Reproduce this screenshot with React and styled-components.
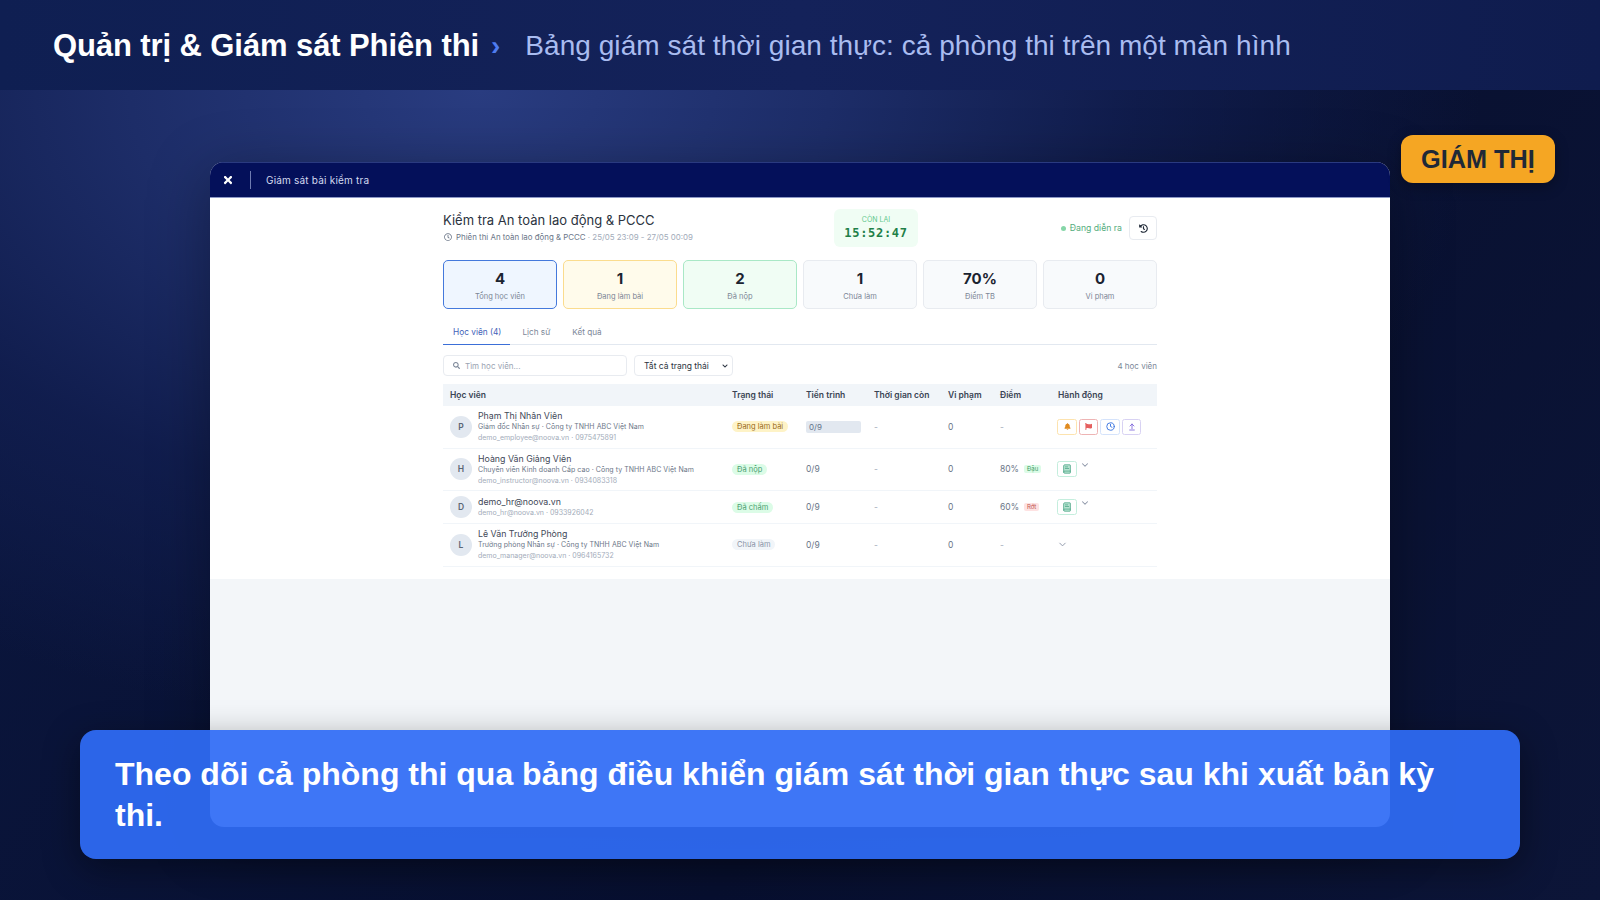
import styled, { createGlobalStyle } from "styled-components";
import { FaBell, FaFlag, FaHistory, FaTimes, FaRegClock, FaSearch, FaChevronDown } from "react-icons/fa";
import { ArrowUpFromLine, BookText, ChevronDown, Clock } from "lucide-react";

const GlobalStyle = createGlobalStyle`
  html, body { margin: 0; padding: 0; }
  body { width: 1600px; height: 900px; overflow: hidden; background: #070f2b; }
`;

const Slide = styled.div`
  position: relative;
  width: 1600px;
  height: 900px;
  overflow: hidden;
  font-family: "Liberation Sans", Arial, sans-serif;
  background:
    radial-gradient(ellipse 1000px 640px at 480px 90px, #293c80 0%, #1d2d68 35%, rgba(18, 31, 82, 0.8) 65%, rgba(10, 20, 52, 0) 100%),
    linear-gradient(125deg, #0b1740 0%, #081030 60%, #0c1538 100%);
`;

const Header = styled.header`
  height: 90px;
  box-sizing: border-box;
  display: flex;
  align-items: center;
  padding: 2px 0 0 53px;
  background: linear-gradient(90deg, #0f1f52 0%, #14225a 50%, #0f1c4e 100%);
`;

const HeaderTitle = styled.h1`
  margin: 0;
  font-size: 31px;
  letter-spacing: -0.1px;
  font-weight: 700;
  color: #ffffff;
`;

const HeaderArrow = styled.span`
  margin: 0 25px 0 12px;
  font-size: 28px;
  font-weight: 700;
  color: #4f7cf0;
`;

const HeaderSub = styled.span`
  font-size: 28px;
  letter-spacing: 0.05px;
  color: #a9bcf0;
`;

const Stage = styled.main`
  padding: 72px 0 0 210px;
`;

const Window = styled.section`
  width: 1180px;
  height: 665px;
  display: flex;
  flex-direction: column;
  border-radius: 14px;
  overflow: hidden;
  background: #f3f6f9;
  box-shadow: 0 12px 60px rgba(0, 0, 0, 0.35);
`;

const TitleBar = styled.div`
  height: 36px;
  flex: none;
  display: flex;
  align-items: center;
  background: #04105a;
  border-top: 1px solid #2a3a80;
  border-bottom: 1px solid #8d98c6;
  box-sizing: border-box;
  color: #ffffff;
  font-family: Inter, sans-serif;
`;

const CloseIcon = styled(FaTimes)`
  margin-left: 12px;
  font-size: 12px;
`;

const TitleDivider = styled.span`
  width: 1px;
  height: 18px;
  margin: 0 15px 0 16px;
  background: #6f7bb0;
`;

const TitleText = styled.span`
  font-size: 10px;
  letter-spacing: 0.2px;
  color: #d5dbf0;
`;

const Page = styled.div`
  flex: none;
  height: 381px;
  box-sizing: border-box;
  padding: 11px 233px 0;
  background: #ffffff;
  font-family: Inter, sans-serif;
`;

const TopRow = styled.div`
  display: flex;
  align-items: center;
  height: 38px;
  margin-bottom: 13px;
`;

const ExamInfo = styled.div`
  width: 391px;
  margin-top: -2px;
`;

const ExamTitle = styled.div`
  font-size: 13px;
  line-height: 16px;
  color: #2b3340;
`;

const ExamMeta = styled.div`
  display: flex;
  align-items: center;
  gap: 4px;
  margin-top: 4px;
  font-size: 7.9px;
  line-height: 11px;
  color: #6b7688;
  svg { font-size: 8px; margin-left: 1px; }
`;

const ExamDates = styled.span`
  color: #a3acba;
`;

const Countdown = styled.div`
  width: 84px;
  height: 38px;
  display: flex;
  flex-direction: column;
  align-items: center;
  justify-content: center;
  border-radius: 6px;
  background: #f0fdf4;
`;

const CountdownLabel = styled.span`
  font-size: 7px;
  line-height: 9px;
  color: #5fc88c;
`;

const CountdownTime = styled.span`
  margin-top: 2px;
  font-family: "DejaVu Sans Mono", monospace;
  font-size: 12px;
  line-height: 15px;
  font-weight: 700;
  letter-spacing: 0.7px;
  color: #1f8048;
`;

const TopRight = styled.div`
  margin-left: auto;
  display: flex;
  align-items: center;
  gap: 7px;
`;

const LiveStatus = styled.span`
  display: flex;
  align-items: center;
  gap: 4px;
  font-size: 8.7px;
  color: #55ad7d;
`;

const LiveDot = styled.span`
  width: 5px;
  height: 5px;
  border-radius: 50%;
  background: #86d6a8;
`;

const HistoryButton = styled.span`
  width: 28px;
  height: 24px;
  display: flex;
  align-items: center;
  justify-content: center;
  box-sizing: border-box;
  border: 1px solid #e8ebf0;
  border-radius: 4px;
  color: #1f2937;
  font-size: 9px;
`;

const Stats = styled.div`
  display: grid;
  grid-template-columns: repeat(6, 1fr);
  gap: 6px;
  margin-bottom: 12px;
`;

const STAT_TONES = {
  blue: { bg: "#eff6ff", line: "#4479dc" },
  amber: { bg: "#fffbeb", line: "#fbdc8e" },
  green: { bg: "#f0fdf4", line: "#a9e8c6" },
  plain: { bg: "#f8fafc", line: "#e8ebf0" },
};

const StatCard = styled.div`
  height: 49px;
  box-sizing: border-box;
  display: flex;
  flex-direction: column;
  align-items: center;
  padding-top: 9px;
  border-radius: 5px;
  border: 1px solid ${({ $tone }) => STAT_TONES[$tone].line};
  background: ${({ $tone }) => STAT_TONES[$tone].bg};
`;

const StatValue = styled.span`
  font-size: 15px;
  line-height: 18px;
  font-weight: 700;
  color: #1b2330;
`;

const StatLabel = styled.span`
  margin-top: 4px;
  font-size: 7.5px;
  line-height: 10px;
  color: #7c8696;
`;

const Tabs = styled.div`
  display: flex;
  height: 23px;
  border-bottom: 1px solid #e2e8f0;
  margin-bottom: 10px;
`;

const Tab = styled.span`
  box-sizing: border-box;
  height: 24px;
  padding: ${({ $active }) => ($active ? "0 9px 0 10px" : "0 11px")};
  margin-right: ${({ $active }) => ($active ? "1px" : "0")};
  font-size: ${({ $active }) => ($active ? "8.3px" : "8.2px")};
  line-height: 22px;
  color: ${({ $active }) => ($active ? "#3f5fb8" : "#7c8798")};
  border-bottom: ${({ $active }) => ($active ? "1.5px solid #3b6fd8" : "none")};
`;

const Filters = styled.div`
  display: flex;
  align-items: center;
  gap: 7px;
  margin-bottom: 8px;
`;

const SearchBox = styled.div`
  width: 184px;
  height: 21px;
  box-sizing: border-box;
  display: flex;
  align-items: center;
  gap: 5px;
  padding-left: 9px;
  border: 1px solid #e8ebf0;
  border-radius: 4px;
  font-size: 8px;
  color: #9aa3b2;
  svg { font-size: 7px; color: #7c8798; }
`;

const SelectBox = styled.div`
  width: 99px;
  height: 21px;
  box-sizing: border-box;
  display: flex;
  align-items: center;
  justify-content: space-between;
  padding: 0 4px 0 9px;
  border: 1px solid #e8ebf0;
  border-radius: 4px;
  font-size: 8.5px;
  color: #2b3340;
  svg { font-size: 6px; }
`;

const Count = styled.span`
  margin-left: auto;
  font-size: 8px;
  color: #7c8798;
`;

const COLUMNS = "282px 74px 68px 74px 52px 58px 106px";

const TableHead = styled.div`
  display: grid;
  grid-template-columns: ${COLUMNS};
  height: 22px;
  align-items: center;
  background: #f1f5f9;
  font-size: 8.5px;
  font-weight: 600;
  color: #3a4454;
`;

const HeadCell = styled.span`
  padding-left: 7px;
`;

const Row = styled.div`
  display: grid;
  grid-template-columns: ${COLUMNS};
  height: ${({ $short }) => ($short ? "33px" : "42.5px")};
  box-sizing: border-box;
  align-items: center;
  border-bottom: 1px solid #f1f5f9;
  font-size: 8.5px;
  color: #6b7688;
`;

const Cell = styled.div`
  padding-left: 7px;
  display: flex;
  align-items: center;
`;

const Dash = styled.span`
  color: #a3acba;
`;

const Avatar = styled.span`
  flex: none;
  width: 22px;
  height: 22px;
  margin-right: 6px;
  display: flex;
  align-items: center;
  justify-content: center;
  border-radius: 50%;
  background: #e2e8f0;
  font-size: 8.5px;
  font-weight: 600;
  color: #5b6675;
`;

const StudentName = styled.div`
  font-size: 8.8px;
  line-height: 11px;
  color: #3f4958;
`;

const StudentRole = styled.div`
  font-size: 7px;
  line-height: 11px;
  letter-spacing: 0.05px;
  color: #6b7688;
`;

const StudentContact = styled.div`
  font-size: 7px;
  line-height: 11px;
  color: #a3acba;
`;

const BADGE_TONES = {
  amber: { bg: "#fef3c7", fg: "#9a6b1a" },
  green: { bg: "#dcfce7", fg: "#4aa070" },
  grey: { bg: "#f1f5f9", fg: "#8a94a6" },
};

const Badge = styled.span`
  height: 11px;
  padding: 0 5px;
  border-radius: 6px;
  font-size: 7.5px;
  line-height: 11px;
  background: ${({ $tone }) => BADGE_TONES[$tone].bg};
  color: ${({ $tone }) => BADGE_TONES[$tone].fg};
`;

const ProgressBox = styled.span`
  width: 55px;
  height: 12px;
  box-sizing: border-box;
  padding-left: 3px;
  border-radius: 2px;
  background: #e2e8f0;
  font-size: 8px;
  line-height: 12px;
  color: #64748b;
`;

const ScoreTag = styled.span`
  margin-left: 5px;
  padding: 0 3px;
  height: 8px;
  border-radius: 2px;
  font-size: 6px;
  line-height: 8px;
  background: ${({ $fail }) => ($fail ? "#fee2e2" : "#dcfce7")};
  color: ${({ $fail }) => ($fail ? "#c0534f" : "#3f9a66")};
`;

const Actions = styled(Cell)`
  gap: 2px;
  padding-left: 6px;
`;

const ACTION_TONES = {
  amber: { line: "#fde3ae", fg: "#e08a1e" },
  red: { line: "#eeb4b4", fg: "#e5605f" },
  blue: { line: "#d5e3fb", fg: "#3b74e0" },
  purple: { line: "#d8d2f3", fg: "#7a60d8" },
  teal: { line: "#c4eedd", fg: "#4aa585" },
};

const ActionButton = styled.span`
  width: ${({ $narrow }) => ($narrow ? "19px" : "20px")};
  height: 16px;
  box-sizing: border-box;
  display: flex;
  align-items: center;
  justify-content: center;
  border-radius: 2.5px;
  font-size: 7px;
  background: #ffffff;
  border: 1px solid ${({ $tone }) => ACTION_TONES[$tone].line};
  color: ${({ $tone }) => ACTION_TONES[$tone].fg};
`;

const RaisedChevron = styled(ChevronDown)`
  margin: -9px 0 0 1px;
  color: #8a94a6;
`;

const PlainChevron = styled(ChevronDown)`
  color: #8a94a6;
`;

const RoleBadge = styled.div`
  position: absolute;
  left: 1401px;
  top: 135px;
  height: 48px;
  padding: 0 20px;
  display: flex;
  align-items: center;
  border-radius: 12px;
  background: #f5a623;
  box-shadow: 0 4px 14px rgba(0, 0, 0, 0.3);
  font-size: 25.3px;
  font-weight: 700;
  color: #1f2937;
`;

const Caption = styled.div`
  position: absolute;
  left: 80px;
  top: 730px;
  width: 1440px;
  height: 129px;
  box-sizing: border-box;
  padding: 24px 35px;
  border-radius: 16px;
  background: rgba(47, 108, 245, 0.93);
  box-shadow: 0 10px 36px rgba(0, 0, 0, 0.4);
  font-size: 32px;
  line-height: 41px;
  font-weight: 700;
  color: #ffffff;
`;

const students = [
  {
    initial: "P",
    name: "Phạm Thị Nhân Viên",
    role: "Giám đốc Nhân sự · Công ty TNHH ABC Việt Nam",
    contact: "demo_employee@noova.vn · 0975475891",
    badge: ["amber", "Đang làm bài"],
    active: true,
  },
  {
    initial: "H",
    name: "Hoàng Văn Giảng Viên",
    role: "Chuyên viên Kinh doanh Cấp cao · Công ty TNHH ABC Việt Nam",
    contact: "demo_instructor@noova.vn · 0934083318",
    badge: ["green", "Đã nộp"],
    score: "80%",
    tag: "Đậu",
  },
  {
    initial: "D",
    name: "demo_hr@noova.vn",
    contact: "demo_hr@noova.vn · 0933926042",
    badge: ["green", "Đã chấm"],
    score: "60%",
    tag: "Rớt",
    fail: true,
    short: true,
  },
  {
    initial: "L",
    name: "Lê Văn Trưởng Phòng",
    role: "Trưởng phòng Nhân sự · Công ty TNHH ABC Việt Nam",
    contact: "demo_manager@noova.vn · 0964165732",
    badge: ["grey", "Chưa làm"],
  },
];

const stats = [
  ["blue", "4", "Tổng học viên"],
  ["amber", "1", "Đang làm bài"],
  ["green", "2", "Đã nộp"],
  ["plain", "1", "Chưa làm"],
  ["plain", "70%", "Điểm TB"],
  ["plain", "0", "Vi phạm"],
];

const headers = ["Học viên", "Trạng thái", "Tiến trình", "Thời gian còn", "Vi phạm", "Điểm", "Hành động"];

const StudentActions = ({ student }) => {
  if (student.active) {
    return (
      <Actions>
        <ActionButton $tone="amber"><FaBell /></ActionButton>
        <ActionButton $tone="red" $narrow><FaFlag /></ActionButton>
        <ActionButton $tone="blue"><Clock size={9} strokeWidth={2.5} /></ActionButton>
        <ActionButton $tone="purple" $narrow><ArrowUpFromLine size={8} strokeWidth={2.5} /></ActionButton>
      </Actions>
    );
  }
  if (student.score) {
    return (
      <Actions>
        <ActionButton $tone="teal"><BookText size={10} strokeWidth={2} fill="#bfe7d6" /></ActionButton>
        <RaisedChevron size={10} strokeWidth={2.5} />
      </Actions>
    );
  }
  return (
    <Actions>
      <PlainChevron size={11} />
    </Actions>
  );
};

const App = () => {
  return (
    <Slide>
      <GlobalStyle />
      <Header>
        <HeaderTitle>Quản trị & Giám sát Phiên thi</HeaderTitle>
        <HeaderArrow>›</HeaderArrow>
        <HeaderSub>Bảng giám sát thời gian thực: cả phòng thi trên một màn hình</HeaderSub>
      </Header>

      <Stage>
        <Window>
          <TitleBar>
            <CloseIcon />
            <TitleDivider />
            <TitleText>Giám sát bài kiểm tra</TitleText>
          </TitleBar>
          <Page>
            <TopRow>
              <ExamInfo>
                <ExamTitle>Kiểm tra An toàn lao động & PCCC</ExamTitle>
                <ExamMeta>
                  <FaRegClock />
                  <span>Phiên thi An toàn lao động & PCCC <ExamDates>· 25/05 23:09 - 27/05 00:09</ExamDates></span>
                </ExamMeta>
              </ExamInfo>
              <Countdown>
                <CountdownLabel>CÒN LẠI</CountdownLabel>
                <CountdownTime>15:52:47</CountdownTime>
              </Countdown>
              <TopRight>
                <LiveStatus><LiveDot />Đang diễn ra</LiveStatus>
                <HistoryButton><FaHistory /></HistoryButton>
              </TopRight>
            </TopRow>

            <Stats>
              {stats.map(([tone, value, label]) => (
                <StatCard key={label} $tone={tone}>
                  <StatValue>{value}</StatValue>
                  <StatLabel>{label}</StatLabel>
                </StatCard>
              ))}
            </Stats>

            <Tabs>
              <Tab $active>Học viên (4)</Tab>
              <Tab>Lịch sử</Tab>
              <Tab>Kết quả</Tab>
            </Tabs>

            <Filters>
              <SearchBox><FaSearch />Tìm học viên...</SearchBox>
              <SelectBox>Tất cả trạng thái<FaChevronDown /></SelectBox>
              <Count>4 học viên</Count>
            </Filters>

            <TableHead>
              {headers.map((h) => <HeadCell key={h}>{h}</HeadCell>)}
            </TableHead>
            {students.map((s) => (
              <Row key={s.initial} $short={s.short}>
                <Cell>
                  <Avatar>{s.initial}</Avatar>
                  <div>
                    <StudentName>{s.name}</StudentName>
                    {s.role && <StudentRole>{s.role}</StudentRole>}
                    <StudentContact>{s.contact}</StudentContact>
                  </div>
                </Cell>
                <Cell><Badge $tone={s.badge[0]}>{s.badge[1]}</Badge></Cell>
                <Cell>{s.active ? <ProgressBox>0/9</ProgressBox> : "0/9"}</Cell>
                <Cell><Dash>-</Dash></Cell>
                <Cell>0</Cell>
                <Cell>
                  {s.score ? s.score : <Dash>-</Dash>}
                  {s.tag && <ScoreTag $fail={s.fail}>{s.tag}</ScoreTag>}
                </Cell>
                <StudentActions student={s} />
              </Row>
            ))}
          </Page>
        </Window>
      </Stage>

      <RoleBadge>GIÁM THỊ</RoleBadge>
      <Caption>Theo dõi cả phòng thi qua bảng điều khiển giám sát thời gian thực sau khi xuất bản kỳ thi.</Caption>
    </Slide>
  );
};

export default App;
